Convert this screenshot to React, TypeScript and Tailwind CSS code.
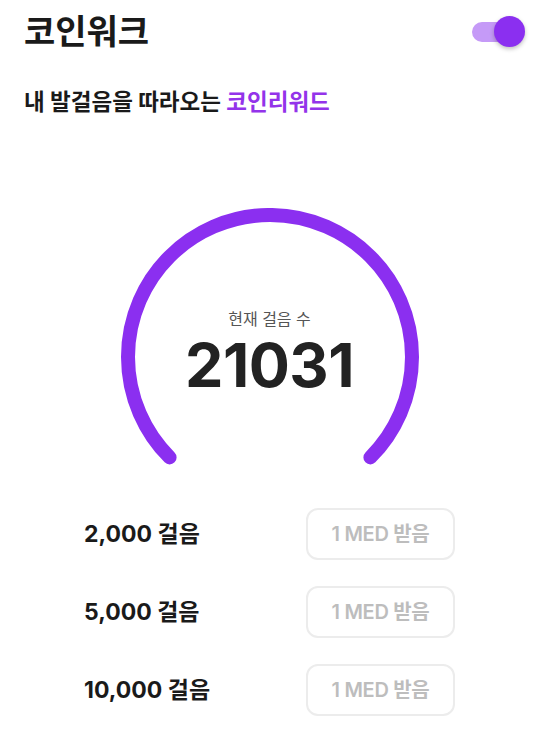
const font = { fontFamily: '"Inter", "Noto Sans CJK KR", sans-serif' };

function Toggle() {
  return (
    <div className="relative w-[54px] h-[32px] flex items-center">
      <div className="ml-[1px] w-[42px] h-[20px] rounded-full bg-[#c59af7]" />
      <div className="absolute right-0 top-0 w-[31px] h-[31px] rounded-full bg-[#8b2ff0] shadow-[0_2px_4px_rgba(0,0,0,0.25)]" />
    </div>
  );
}

function Gauge() {
  return (
    <div className="relative w-[298px] h-[264px] mx-auto">
      <svg width="298" height="264" viewBox="0 0 298 264">
        <path
          d="M 48.6 249.4 A 142 142 0 1 1 249.4 249.4"
          fill="none"
          stroke="#8b2ff0"
          strokeWidth="14"
          strokeLinecap="round"
        />
      </svg>
      <div className="absolute inset-x-0 top-[103px] flex flex-col items-center">
        <span className="text-[16px] text-[#555] leading-none">현재 걸음 수</span>
        <span className="mt-[8px] text-[61px] font-bold text-[#222] leading-none tracking-[-0.5px]">21031</span>
      </div>
    </div>
  );
}

const rows = ["2,000 걸음", "5,000 걸음", "10,000 걸음"];

export default function App() {
  return (
    <div style={font} className="w-[539px] h-[751px] bg-white overflow-hidden">
      <div className="flex items-center justify-between pl-[24px] pr-[14px] pt-[10px]">
        <h1 className="text-[34px] font-bold text-[#1a1a1a] leading-[44px]">코인워크</h1>
        <Toggle />
      </div>
      <p className="mt-[33px] px-[24px] text-[22.5px] font-bold text-[#1a1a1a] leading-[30px]">
        내 발걸음을 따라오는 <span className="text-[#9333ea]">코인리워드</span>
      </p>
      <div className="mt-[91px]">
        <Gauge />
      </div>
      <div className="mt-[36px] px-[84px] flex flex-col gap-[26px]">
        {rows.map((r) => (
          <div key={r} className="flex items-center justify-between">
            <span className="text-[23px] font-bold text-[#1a1a1a]">{r}</span>
            <button className="w-[149px] h-[52px] rounded-[12px] border-2 border-[#ececec] text-[20px] font-semibold text-[#bdbdbd] tracking-[-0.3px]">
              1 MED 받음
            </button>
          </div>
        ))}
      </div>
    </div>
  );
}
